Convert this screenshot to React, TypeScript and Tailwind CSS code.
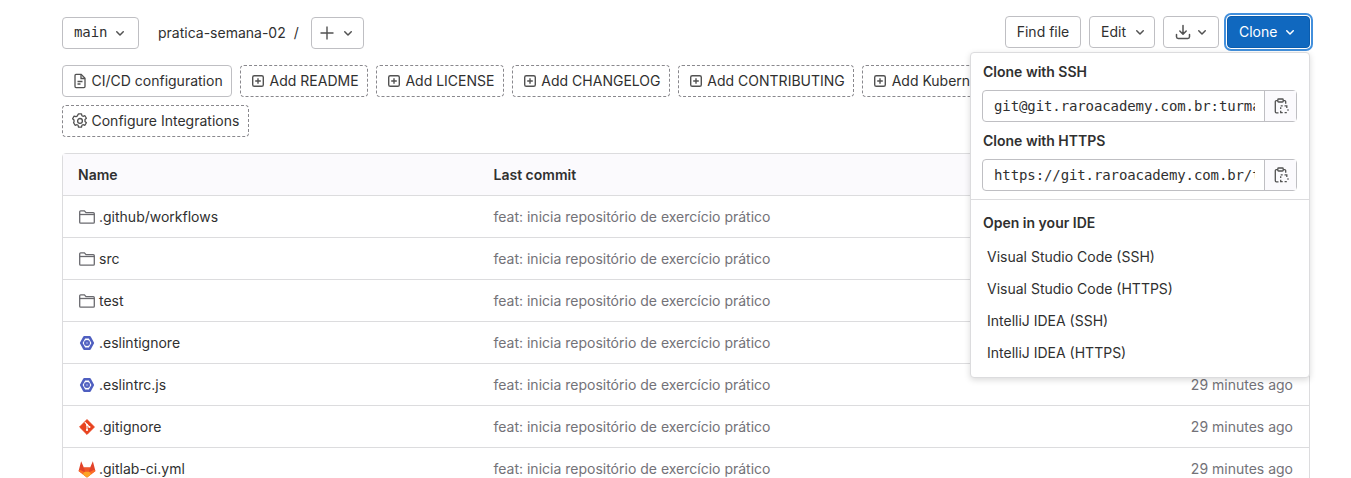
const sans = "font-['Inter','Liberation_Sans',sans-serif]"
const mono = "font-['DejaVu_Sans_Mono',monospace] tracking-[-0.1px]"

function Chevron({ className = "text-[#525252]" }: { className?: string }) {
  return (
    <svg viewBox="0 0 16 16" className={`w-4 h-4 ${className}`} fill="currentColor">
      <path d="M4.22 6.22a.75.75 0 0 1 1.06 0L8 8.94l2.72-2.72a.75.75 0 1 1 1.06 1.06l-3.25 3.25a.75.75 0 0 1-1.06 0L4.22 7.28a.75.75 0 0 1 0-1.06z" />
    </svg>
  )
}

function PlusBox() {
  return (
    <svg viewBox="0 0 16 16" className="w-4 h-4 text-[#525252]" fill="none" stroke="currentColor" strokeWidth="1.4">
      <rect x="2.7" y="2.7" width="10.6" height="10.6" rx="1.6" />
      <path d="M8 5.2v5.6M5.2 8h5.6" />
    </svg>
  )
}

function FileIcon() {
  return (
    <svg viewBox="0 0 16 16" className="w-4 h-4 text-[#525252]" fill="none" stroke="currentColor" strokeWidth="1.3">
      <path d="M3 2.400c0-.6.5-1 1-1h5.200L13 5.200v8.400c0 .6-.5 1-1 1H4c-.5 0-1-.4-1-1z" />
      <path d="M9 1.600v3.900h3.900M5.500 8.500h5M5.500 11h3" />
    </svg>
  )
}

function GearIcon() {
  return (
    <svg viewBox="0 0 16 16" className="w-4 h-4 text-[#525252]" fill="none" stroke="currentColor" strokeWidth="1.3" strokeLinejoin="round">
      <path d="M6.500.8h3l.4 1.900 1.100.6 1.900-.6 1.500 2.600-1.400 1.300v1.800l1.400 1.300-1.500 2.600-1.900-.6-1.100.6-.4 1.900h-3l-.4-1.900-1.100-.6-1.900.6-1.500-2.600L2 8.800V7L.6 5.700l1.500-2.600 1.900.6 1.100-.6z" />
      <circle cx="8" cy="7.900" r="2.400" />
    </svg>
  )
}

function DownloadIcon() {
  return (
    <svg viewBox="0 0 16 16" className="w-4 h-4 text-[#525252]" fill="none" stroke="currentColor" strokeWidth="1.5" strokeLinecap="round" strokeLinejoin="round">
      <path d="M8 1.500v8.500M4.800 7 8 10.200 11.200 7M1.500 10.500v2.300c0 .9.700 1.700 1.700 1.700h9.600c1 0 1.700-.8 1.700-1.700v-2.300" />
    </svg>
  )
}

function CopyIcon() {
  return (
    <svg viewBox="0 0 16 16" className="w-4 h-4 text-[#525252]" fill="none" stroke="currentColor" strokeWidth="1.300">
      <path d="M4.800 2.600H3.300c-.6 0-1 .4-1 1v10.200c0 .6.400 1 1 1h2.200M10.200 2.600h1.500c.6 0 1 .4 1 1v2.200" />
      <rect x="4.800" y="1" width="5.400" height="3" rx=".8" />
      <path d="M7.700 7.800h2M11.500 7.800h2.300v2.200M15 11.300v1.500M13.800 14.700h-2.200M9.700 14.700H7.700v-2M7.700 10.900V9.200" />
    </svg>
  )
}

function FolderIcon() {
  return (
    <svg viewBox="0 0 16 16" className="w-4 h-4 text-[#6a6a6f]" fill="none" stroke="currentColor" strokeWidth="1.300">
      <path d="M.7 2.800c0-.6.400-1 1-1h3.700l1.600 1.900h7.300c.6 0 1 .4 1 1V13.200c0 .6-.4 1-1 1H1.700c-.6 0-1-.4-1-1z" />
      <path d="M.7 5.500h14.600" />
    </svg>
  )
}

function EslintIcon() {
  return (
    <svg viewBox="0 0 16 16" className="w-4 h-4">
      <path d="M5.300 2.300h5.400L13.800 8l-3.100 5.700H5.300L2.200 8z" fill="none" stroke="#4f5fc0" strokeWidth="2.600" strokeLinejoin="round" />
      <circle cx="8" cy="8" r="3" fill="#5564c2" />
      <circle cx="8" cy="8" r="1.100" fill="#8e99da" />
    </svg>
  )
}

function GitIcon() {
  return (
    <svg viewBox="0 0 16 16" className="w-4 h-4">
      <path d="M8 .6 15.400 8 8 15.400.6 8z" fill="#e8431f" stroke="#e8431f" strokeLinejoin="round" />
      <path d="M5.800 3.200 10.400 7.800M8 6v5" stroke="#fff" strokeWidth="1.100" />
      <circle cx="8" cy="5.800" r="1.100" fill="#fff" />
      <circle cx="10.400" cy="8" r="1.100" fill="#fff" />
      <circle cx="8" cy="11" r="1.100" fill="#fff" />
    </svg>
  )
}

function GitlabIcon() {
  return (
    <svg viewBox="0 0 16 16" className="w-[18px] h-[18px] -ml-px mr-[-1px]">
      <path d="M8 15.600 .5 9.800 2.800 1l2.400 5.600h5.600L13.200 1l2.300 8.800z" fill="#e24329" />
      <path d="M8 15.600 5.200 6.600h5.600z" fill="#f0572a" />
      <path d="M8 15.600 .5 9.800l1.200-1.200 3.800 2zM8 15.600l7.500-5.800-1.200-1.200-3.800 2z" fill="#fc6d26" />
      <path d="M8 15.600 4.200 12.700 5.900 10.500H10.100l1.700 2.200z" fill="#fca326" />
    </svg>
  )
}

function Btn({ children, className = "" }: { children: React.ReactNode; className?: string }) {
  return (
    <div className={`h-8 flex items-center rounded border border-[#bfbfc3] bg-white text-[#303030] text-sm ${className}`}>
      {children}
    </div>
  )
}

function ActionBtn({ icon, label, solid }: { icon: React.ReactNode; label: string; solid?: boolean }) {
  return (
    <div className={`h-8 flex items-center gap-[3.500px] pl-[9px] pr-[8.400px] rounded border text-sm text-[#303030] whitespace-nowrap ${solid ? "border-[#bfbfc3]" : "border-dashed border-[#89888d]"}`}>
      {icon}
      <span>{label}</span>
    </div>
  )
}

function CloneField({ label, value }: { label: string; value: string }) {
  return (
    <div>
      <p className="h-[20px] mb-[8px] ml-px text-sm font-semibold text-[#303030] leading-5">{label}</p>
      <div className="flex h-8 w-[315px] rounded border border-[#bfbfc3]">
        <input
          readOnly
          value={value}
          className={`flex-1 min-w-0 pl-[11px] pr-[9px] outline-none bg-transparent text-sm text-[#303030] ${mono}`}
        />
        <div className="w-8 flex items-center justify-center border-l border-[#bfbfc3] bg-[#fbfafd]">
          <CopyIcon />
        </div>
      </div>
    </div>
  )
}

const rows = [
  { name: ".github/workflows", icon: <FolderIcon /> },
  { name: "src", icon: <FolderIcon /> },
  { name: "test", icon: <FolderIcon /> },
  { name: ".eslintignore", icon: <EslintIcon /> },
  { name: ".eslintrc.js", icon: <EslintIcon /> },
  { name: ".gitignore", icon: <GitIcon /> },
  { name: ".gitlab-ci.yml", icon: <GitlabIcon /> },
]

export default function App() {
  return (
    <div className={`relative h-[478px] w-[1351px] overflow-hidden bg-white pl-[62px] pr-[41px] pt-4 ${sans}`}>
      <div className="flex justify-between">
        <div className="flex items-center">
          <Btn className={`w-[77px] pl-[11px] gap-[5px] ${mono}`}>
            <span className="-mt-px">main</span>
            <Chevron />
          </Btn>
          <span className="ml-[19px] text-sm text-[#303030]">pratica-semana-02</span>
          <span className="ml-[8px] text-sm text-[#303030]">/</span>
          <Btn className="ml-[12px] mt-[1px] w-[53px] pl-[7px] gap-[5px]">
            <svg viewBox="0 0 16 16" className="w-4 h-4 text-[#525252]" fill="none" stroke="currentColor" strokeWidth="1.400">
              <path d="M8 1.500v13M1.500 8h13" />
            </svg>
            <Chevron />
          </Btn>
        </div>
        <div className="flex gap-2">
          <Btn className="w-[76px] justify-center">Find file</Btn>
          <Btn className="w-[66px] pl-[11px] gap-[6px]">
            <span>Edit</span>
            <Chevron />
          </Btn>
          <Btn className="w-[56px] pl-[11px] gap-[3px]">
            <DownloadIcon />
            <Chevron />
          </Btn>
          <div className="h-8 w-[83px] pl-[11px] gap-[5px] flex items-center rounded border border-[#0b5cad] bg-[#1068bf] text-white text-sm shadow-[0_0_0_1px_#fff,0_0_0_3px_#428fdc]">
            <span>Clone</span>
            <Chevron className="text-white" />
          </div>
        </div>
      </div>

      <div className="mt-4 flex flex-wrap gap-2 w-[1100px]">
        <ActionBtn solid icon={<FileIcon />} label="CI/CD configuration" />
        <ActionBtn icon={<PlusBox />} label="Add README" />
        <ActionBtn icon={<PlusBox />} label="Add LICENSE" />
        <ActionBtn icon={<PlusBox />} label="Add CHANGELOG" />
        <ActionBtn icon={<PlusBox />} label="Add CONTRIBUTING" />
        <ActionBtn icon={<PlusBox />} label="Add Kubernetes cluster" />
        <ActionBtn icon={<GearIcon />} label="Configure Integrations" />
      </div>

      <div className="mt-4 border border-[#dcdcde] rounded-t text-sm">
        <div className="h-[42px] flex items-center bg-[#fbfafd] border-b border-[#dcdcde] font-semibold text-[#303030]">
          <div className="w-[430.500px] pl-[15px]">Name</div>
          <div className="flex-1">Last commit</div>
          <div className="pr-4">Last update</div>
        </div>
        {rows.map((row) => (
          <div key={row.name} className="h-[42px] flex items-center border-b border-[#dcdcde]">
            <div className="w-[430.500px] pl-[16px] flex items-center gap-[4px] text-[#303030]">
              {row.icon}
              <span>{row.name}</span>
            </div>
            <div className="flex-1 text-[#737278]">feat: inicia repositório de exercício prático</div>
            <div className="pr-4 text-[#737278]">29 minutes ago</div>
          </div>
        ))}
      </div>

      <div className="absolute left-[970px] top-[52px] w-[340px] h-[326px] rounded bg-white border border-[#dcdcde] shadow-[0_2px_6px_rgba(0,0,0,0.15)] text-sm">
        <div className="pl-[11px] pt-[9px] flex flex-col gap-[9px]">
          <CloneField label="Clone with SSH" value="git@git.raroacademy.com.br:turma-01/pratica-semana-02.git" />
          <CloneField label="Clone with HTTPS" value="https://git.raroacademy.com.br/turma-01/pratica-semana-02.git" />
        </div>
        <div className="mt-2 border-t border-[#dcdcde]" />
        <p className="mt-[13px] pl-3 h-5 leading-5 font-semibold text-[#303030]">Open in your IDE</p>
        <div className="mt-[8px] pl-4 text-[#303030]">
          <div className="h-8 flex items-center">Visual Studio Code (SSH)</div>
          <div className="h-8 flex items-center">Visual Studio Code (HTTPS)</div>
          <div className="h-8 flex items-center">IntelliJ IDEA (SSH)</div>
          <div className="h-8 flex items-center">IntelliJ IDEA (HTTPS)</div>
        </div>
      </div>
    </div>
  )
}
